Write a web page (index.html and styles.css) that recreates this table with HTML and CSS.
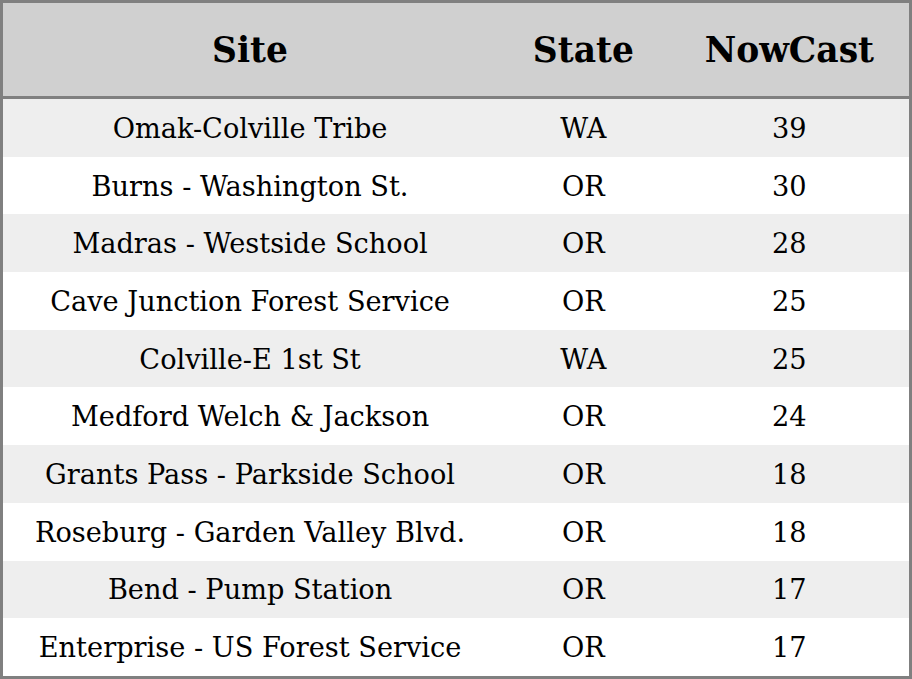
FILE: index.html
```html
<!DOCTYPE html>
<html>
<head>
<meta charset="utf-8">
<link rel="stylesheet" href="styles.css">
</head>
<body>
<table class="aq">
  <colgroup>
    <col class="c-site">
    <col class="c-state">
    <col class="c-now">
  </colgroup>
  <thead>
    <tr><th>Site</th><th>State</th><th>NowCast</th></tr>
  </thead>
  <tbody>
    <tr><td>Omak-Colville Tribe</td><td>WA</td><td>39</td></tr>
    <tr><td>Burns - Washington St.</td><td>OR</td><td>30</td></tr>
    <tr><td>Madras - Westside School</td><td>OR</td><td>28</td></tr>
    <tr><td>Cave Junction Forest Service</td><td>OR</td><td>25</td></tr>
    <tr><td>Colville-E 1st St</td><td>WA</td><td>25</td></tr>
    <tr><td>Medford Welch &amp; Jackson</td><td>OR</td><td>24</td></tr>
    <tr><td>Grants Pass - Parkside School</td><td>OR</td><td>18</td></tr>
    <tr><td>Roseburg - Garden Valley Blvd.</td><td>OR</td><td>18</td></tr>
    <tr><td>Bend - Pump Station</td><td>OR</td><td>17</td></tr>
    <tr><td>Enterprise - US Forest Service</td><td>OR</td><td>17</td></tr>
  </tbody>
</table>
</body>
</html>
```
FILE: styles.css
```css
html, body {
  margin: 0;
  padding: 0;
  background: #ffffff;
}
.aq {
  width: 912px;
  height: 679px;
  border-collapse: collapse;
  border: 3px solid #808080;
  table-layout: fixed;
  font-family: "DejaVu Serif", serif;
  color: #000;
}
.c-site { width: 494px; }
.c-state { width: 172px; }
.c-now { width: 240px; }
.aq th {
  height: 93px;
  padding: 0;
  background: #d0d0d0;
  font-size: 34.5px;
  font-weight: bold;
  text-align: center;
  border-bottom: 3px solid #808080;
}
.aq td {
  height: 55.7px;
  padding: 2px 0 0;
  font-size: 27.2px;
  line-height: 1.1;
  text-align: center;
}
.aq tbody tr:nth-child(odd) { background: #eeeeee; }
.aq tbody tr:nth-child(even) { background: #ffffff; }
```
